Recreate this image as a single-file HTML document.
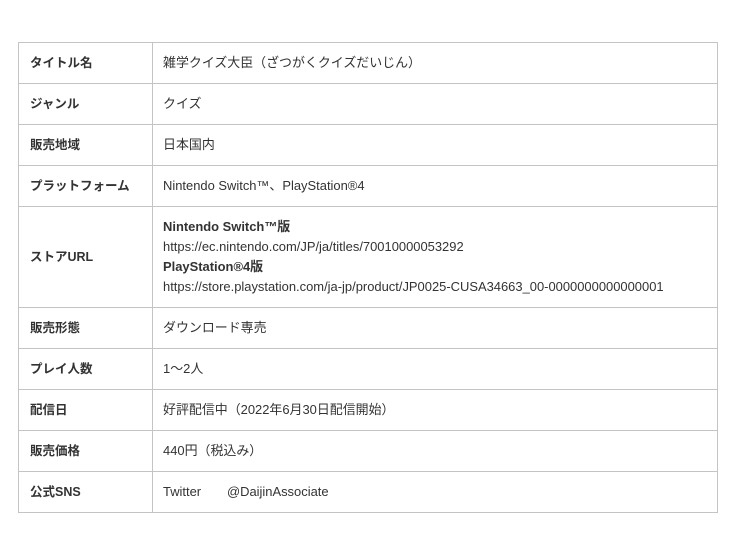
<!DOCTYPE html>
<html><head><meta charset="utf-8"><style>
body{margin:0;background:#fff;width:740px;height:553px;font-family:"Liberation Sans","Noto Sans CJK JP",sans-serif;color:#333;font-size:12.95px}
table{position:absolute;left:18px;top:42px;width:700px;border-collapse:collapse}
td{border:1px solid #c4c4c4;padding:0 10px;height:40px;line-height:20px;vertical-align:middle}
td.h{width:112px;padding-left:11px;padding-right:10px;font-weight:bold;font-size:12.5px}
td.u{height:100px}
</style></head><body>
<table>
<tr><td class="h">タイトル名</td><td>雑学クイズ大臣（ざつがくクイズだいじん）</td></tr>
<tr><td class="h">ジャンル</td><td>クイズ</td></tr>
<tr><td class="h">販売地域</td><td>日本国内</td></tr>
<tr><td class="h">プラットフォーム</td><td>Nintendo Switch™、PlayStation®4</td></tr>
<tr><td class="h">ストアURL</td><td class="u"><b>Nintendo Switch™版</b><br>https://ec.nintendo.com/JP/ja/titles/70010000053292<br><b>PlayStation®4版</b><br>https://store.playstation.com/ja-jp/product/JP0025-CUSA34663_00-0000000000000001</td></tr>
<tr><td class="h">販売形態</td><td>ダウンロード専売</td></tr>
<tr><td class="h">プレイ人数</td><td>1〜2人</td></tr>
<tr><td class="h">配信日</td><td>好評配信中（2022年6月30日配信開始）</td></tr>
<tr><td class="h">販売価格</td><td>440円（税込み）</td></tr>
<tr><td class="h">公式SNS</td><td>Twitter　　@DaijinAssociate</td></tr>
</table>
</body></html>
